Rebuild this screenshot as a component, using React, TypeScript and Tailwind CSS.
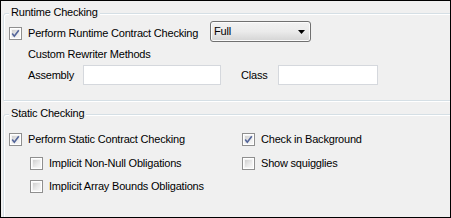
import type { ReactNode } from "react";

function CheckBox({ checked = false }: { checked?: boolean }) {
  return (
    <span className="relative flex h-[13px] w-[13px] shrink-0 border border-[#8f8f8f] bg-white">
      <span className="m-[1px] flex-1 border border-[#f4f4f4] bg-gradient-to-br from-[#cfcfcf] via-[#e6e6e6] to-[#f7f7f7]" />
      {checked && (
        <svg
          className="absolute left-0 top-0"
          width="11"
          height="11"
          viewBox="0 0 11 11"
        >
          <path
            d="M2.2 5.6 L4.3 8.3 L8.8 2.2"
            fill="none"
            stroke="#53659a"
            strokeWidth="1.6"
          />
        </svg>
      )}
    </span>
  );
}

function Check({
  label,
  checked,
  className = "",
}: {
  label: string;
  checked?: boolean;
  className?: string;
}) {
  return (
    <label className={`flex h-[13px] items-center ${className}`}>
      <CheckBox checked={checked} />
      <span className="ml-[6px] whitespace-nowrap leading-[13px]">{label}</span>
    </label>
  );
}

function GroupBox({
  title,
  className = "",
  children,
}: {
  title: string;
  className?: string;
  children: ReactNode;
}) {
  return (
    <div
      className={`relative ml-[2px] w-[470px] rounded-tl-[3px] border border-[#d5dfe5] shadow-[inset_1px_1px_0_#ffffff,1px_1px_0_#ffffff] ${className}`}
    >
      <span className="absolute left-[5px] top-[-8px] bg-[#f0f0f0] px-[2px] leading-[13px]">
        {title}
      </span>
      {children}
    </div>
  );
}

export default function App() {
  return (
    <div
      className="h-[218px] w-[451px] overflow-hidden border border-black bg-[#f0f0f0] text-[11px] tracking-[-0.2px] text-black"
      style={{ fontFamily: '"Liberation Sans", Arial, sans-serif' }}
    >
      <GroupBox title="Runtime Checking" className="mt-[12px] h-[88px]">
        <div className="pl-[5px]">
          {/* Row: runtime checking + level */}
          <div className="mt-[7px] flex h-[21px]">
            <div className="w-[201px] pt-[6px]">
              <Check label="Perform Runtime Contract Checking" checked />
            </div>
            <div className="relative flex h-[21px] w-[101px] items-center rounded-[3px] border border-[#707070] bg-gradient-to-b from-[#f2f2f2] via-[#ebebeb] to-[#d4d4d4] pl-[3px] shadow-[inset_0_0_0_1px_#fbfbfb]">
              <span className="leading-[13px]">Full</span>
              <svg
                className="absolute right-[5px] top-[8px]"
                width="7"
                height="4"
                viewBox="0 0 7 4"
              >
                <path d="M0 0 H7 L3.5 4 Z" fill="#000" />
              </svg>
            </div>
          </div>

          <div className="ml-[19px] mt-[6px] leading-[13px]">Custom Rewriter Methods</div>

          <div className="ml-[19px] mt-[4px] flex h-[20px] items-center">
            <span className="w-[55px] leading-[13px]">Assembly</span>
            <div className="h-[20px] w-[138px] border border-[#d5d8dd] bg-white" />
            <span className="ml-[20px] w-[37px] leading-[13px]">Class</span>
            <div className="h-[20px] w-[100px] border border-[#d5d8dd] bg-white" />
          </div>
        </div>
      </GroupBox>

      <GroupBox title="Static Checking" className="mt-[13px] h-[140px]">
        <div className="pl-[5px]">
          <div className="mt-[18px] flex">
            <div className="w-[233px]">
              <Check label="Perform Static Contract Checking" checked />
            </div>
            <Check label="Check in Background" checked />
          </div>
          <div className="mt-[11px] flex">
            <div className="w-[233px] pl-[21px]">
              <Check label="Implicit Non-Null Obligations" />
            </div>
            <Check label="Show squigglies" />
          </div>
          <div className="mt-[10px] flex">
            <div className="w-[233px] pl-[21px]">
              <Check label="Implicit Array Bounds Obligations" />
            </div>
          </div>
        </div>
      </GroupBox>
    </div>
  );
}
